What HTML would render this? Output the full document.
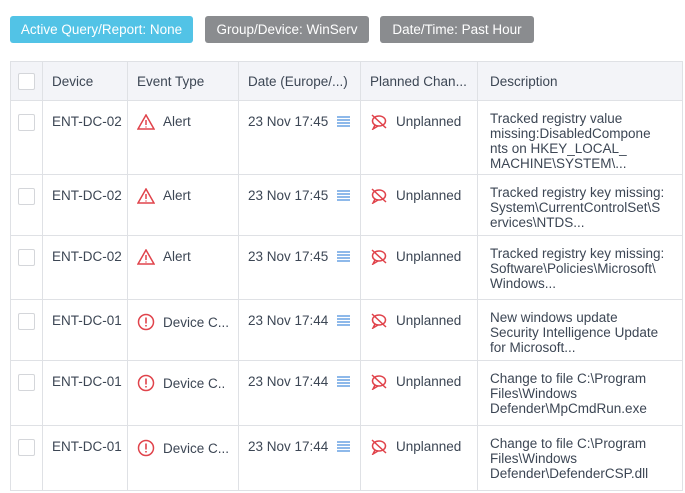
<!DOCTYPE html><html><head><style>
body{margin:0;width:685px;height:493px;background:#fff;font-family:"Liberation Sans",sans-serif;color:#3c4654;overflow:hidden;position:relative}
.tag{position:absolute;top:16px;height:27px;line-height:27px;border-radius:3px;color:#fff;font-size:13.5px;text-align:center;box-sizing:border-box}
table{position:absolute;left:10px;top:61px;border-collapse:collapse;width:673px;table-layout:fixed;font-size:13.5px}
td,th{border:1px solid #dfe1e5;vertical-align:top;padding:0 0 0 9px;text-align:left;font-weight:normal;white-space:nowrap;overflow:hidden}
th{background:#f3f4f8;height:38px;vertical-align:middle}
td{padding-top:13px}
.cb{width:15px;height:15px;border:1px solid #d4d6da;background:#fff;border-radius:2px;margin-left:-2px}
.d{line-height:15px;padding-top:10px;padding-left:12px;white-space:nowrap}
svg{vertical-align:-4px;margin-right:8px}
.m{display:inline-block;vertical-align:-1px;margin-left:9px}
</style></head><body>
<div class="tag" style="left:10px;width:183px;background:#52c3e6">Active Query/Report: None</div>
<div class="tag" style="left:205px;width:164px;background:#8a8c8f">Group/Device: WinServ</div>
<div class="tag" style="left:380px;width:154px;background:#8a8c8f">Date/Time: Past Hour</div>
<table>
<colgroup><col style="width:32px"><col style="width:85px"><col style="width:111px"><col style="width:122px"><col style="width:117px"><col></colgroup>
<tr><th><div class="cb"></div></th><th>Device</th><th>Event Type</th><th>Date (Europe/...)</th><th>Planned Chan...</th><th style="padding-left:12px">Description</th></tr>
<tr style="height:74px"><td><div class="cb"></div></td><td>ENT-DC-02</td><td><svg width="18" height="16" viewBox="0 0 18 16"><path d="M9 1L17 15H1Z" fill="none" stroke="#e0434b" stroke-width="1.5"/><path d="M9 6v5M9 12.5v1" stroke="#e0434b" stroke-width="1.5"/></svg>Alert</td><td>23 Nov 17:45<svg class="m" width="13" height="11" viewBox="0 0 13 11"><path d="M0 1h13M0 4h13M0 7h13M0 10h13" stroke="#4a8fde" stroke-width="1.2"/></svg></td><td><svg width="18" height="16" viewBox="0 0 18 16"><ellipse cx="9" cy="7" rx="6.5" ry="5" fill="none" stroke="#e0434b" stroke-width="1.5"/><path d="M5 11l-2 4 5-3M2 1l14 13" fill="none" stroke="#e0434b" stroke-width="1.5"/></svg>Unplanned</td><td class="d">Tracked registry value<br>missing:DisabledCompone<br>nts on HKEY_LOCAL_<br>MACHINE\SYSTEM\...</td></tr>
<tr style="height:61px"><td><div class="cb"></div></td><td>ENT-DC-02</td><td><svg width="18" height="16" viewBox="0 0 18 16"><path d="M9 1L17 15H1Z" fill="none" stroke="#e0434b" stroke-width="1.5"/><path d="M9 6v5M9 12.5v1" stroke="#e0434b" stroke-width="1.5"/></svg>Alert</td><td>23 Nov 17:45<svg class="m" width="13" height="11" viewBox="0 0 13 11"><path d="M0 1h13M0 4h13M0 7h13M0 10h13" stroke="#4a8fde" stroke-width="1.2"/></svg></td><td><svg width="18" height="16" viewBox="0 0 18 16"><ellipse cx="9" cy="7" rx="6.5" ry="5" fill="none" stroke="#e0434b" stroke-width="1.5"/><path d="M5 11l-2 4 5-3M2 1l14 13" fill="none" stroke="#e0434b" stroke-width="1.5"/></svg>Unplanned</td><td class="d">Tracked registry key missing:<br>System\CurrentControlSet\S<br>ervices\NTDS...</td></tr>
<tr style="height:64px"><td><div class="cb"></div></td><td>ENT-DC-02</td><td><svg width="18" height="16" viewBox="0 0 18 16"><path d="M9 1L17 15H1Z" fill="none" stroke="#e0434b" stroke-width="1.5"/><path d="M9 6v5M9 12.5v1" stroke="#e0434b" stroke-width="1.5"/></svg>Alert</td><td>23 Nov 17:45<svg class="m" width="13" height="11" viewBox="0 0 13 11"><path d="M0 1h13M0 4h13M0 7h13M0 10h13" stroke="#4a8fde" stroke-width="1.2"/></svg></td><td><svg width="18" height="16" viewBox="0 0 18 16"><ellipse cx="9" cy="7" rx="6.5" ry="5" fill="none" stroke="#e0434b" stroke-width="1.5"/><path d="M5 11l-2 4 5-3M2 1l14 13" fill="none" stroke="#e0434b" stroke-width="1.5"/></svg>Unplanned</td><td class="d">Tracked registry key missing:<br>Software\Policies\Microsoft\<br>Windows...</td></tr>
<tr style="height:61px"><td><div class="cb"></div></td><td>ENT-DC-01</td><td><svg width="18" height="18" viewBox="0 0 18 18"><circle cx="9" cy="9" r="7.5" fill="none" stroke="#e0434b" stroke-width="1.5"/><path d="M9 4.5v6M9 12v1.5" stroke="#e0434b" stroke-width="1.6"/></svg>Device C...</td><td>23 Nov 17:44<svg class="m" width="13" height="11" viewBox="0 0 13 11"><path d="M0 1h13M0 4h13M0 7h13M0 10h13" stroke="#4a8fde" stroke-width="1.2"/></svg></td><td><svg width="18" height="16" viewBox="0 0 18 16"><ellipse cx="9" cy="7" rx="6.5" ry="5" fill="none" stroke="#e0434b" stroke-width="1.5"/><path d="M5 11l-2 4 5-3M2 1l14 13" fill="none" stroke="#e0434b" stroke-width="1.5"/></svg>Unplanned</td><td class="d">New windows update<br>Security Intelligence Update<br>for Microsoft...</td></tr>
<tr style="height:65px"><td><div class="cb"></div></td><td>ENT-DC-01</td><td><svg width="18" height="18" viewBox="0 0 18 18"><circle cx="9" cy="9" r="7.5" fill="none" stroke="#e0434b" stroke-width="1.5"/><path d="M9 4.5v6M9 12v1.5" stroke="#e0434b" stroke-width="1.6"/></svg>Device C..</td><td>23 Nov 17:44<svg class="m" width="13" height="11" viewBox="0 0 13 11"><path d="M0 1h13M0 4h13M0 7h13M0 10h13" stroke="#4a8fde" stroke-width="1.2"/></svg></td><td><svg width="18" height="16" viewBox="0 0 18 16"><ellipse cx="9" cy="7" rx="6.5" ry="5" fill="none" stroke="#e0434b" stroke-width="1.5"/><path d="M5 11l-2 4 5-3M2 1l14 13" fill="none" stroke="#e0434b" stroke-width="1.5"/></svg>Unplanned</td><td class="d">Change to file C:\Program<br>Files\Windows<br>Defender\MpCmdRun.exe</td></tr>
<tr style="height:65px"><td><div class="cb"></div></td><td>ENT-DC-01</td><td><svg width="18" height="18" viewBox="0 0 18 18"><circle cx="9" cy="9" r="7.5" fill="none" stroke="#e0434b" stroke-width="1.5"/><path d="M9 4.5v6M9 12v1.5" stroke="#e0434b" stroke-width="1.6"/></svg>Device C...</td><td>23 Nov 17:44<svg class="m" width="13" height="11" viewBox="0 0 13 11"><path d="M0 1h13M0 4h13M0 7h13M0 10h13" stroke="#4a8fde" stroke-width="1.2"/></svg></td><td><svg width="18" height="16" viewBox="0 0 18 16"><ellipse cx="9" cy="7" rx="6.5" ry="5" fill="none" stroke="#e0434b" stroke-width="1.5"/><path d="M5 11l-2 4 5-3M2 1l14 13" fill="none" stroke="#e0434b" stroke-width="1.5"/></svg>Unplanned</td><td class="d">Change to file C:\Program<br>Files\Windows<br>Defender\DefenderCSP.dll</td></tr>
</table>
</body></html>
